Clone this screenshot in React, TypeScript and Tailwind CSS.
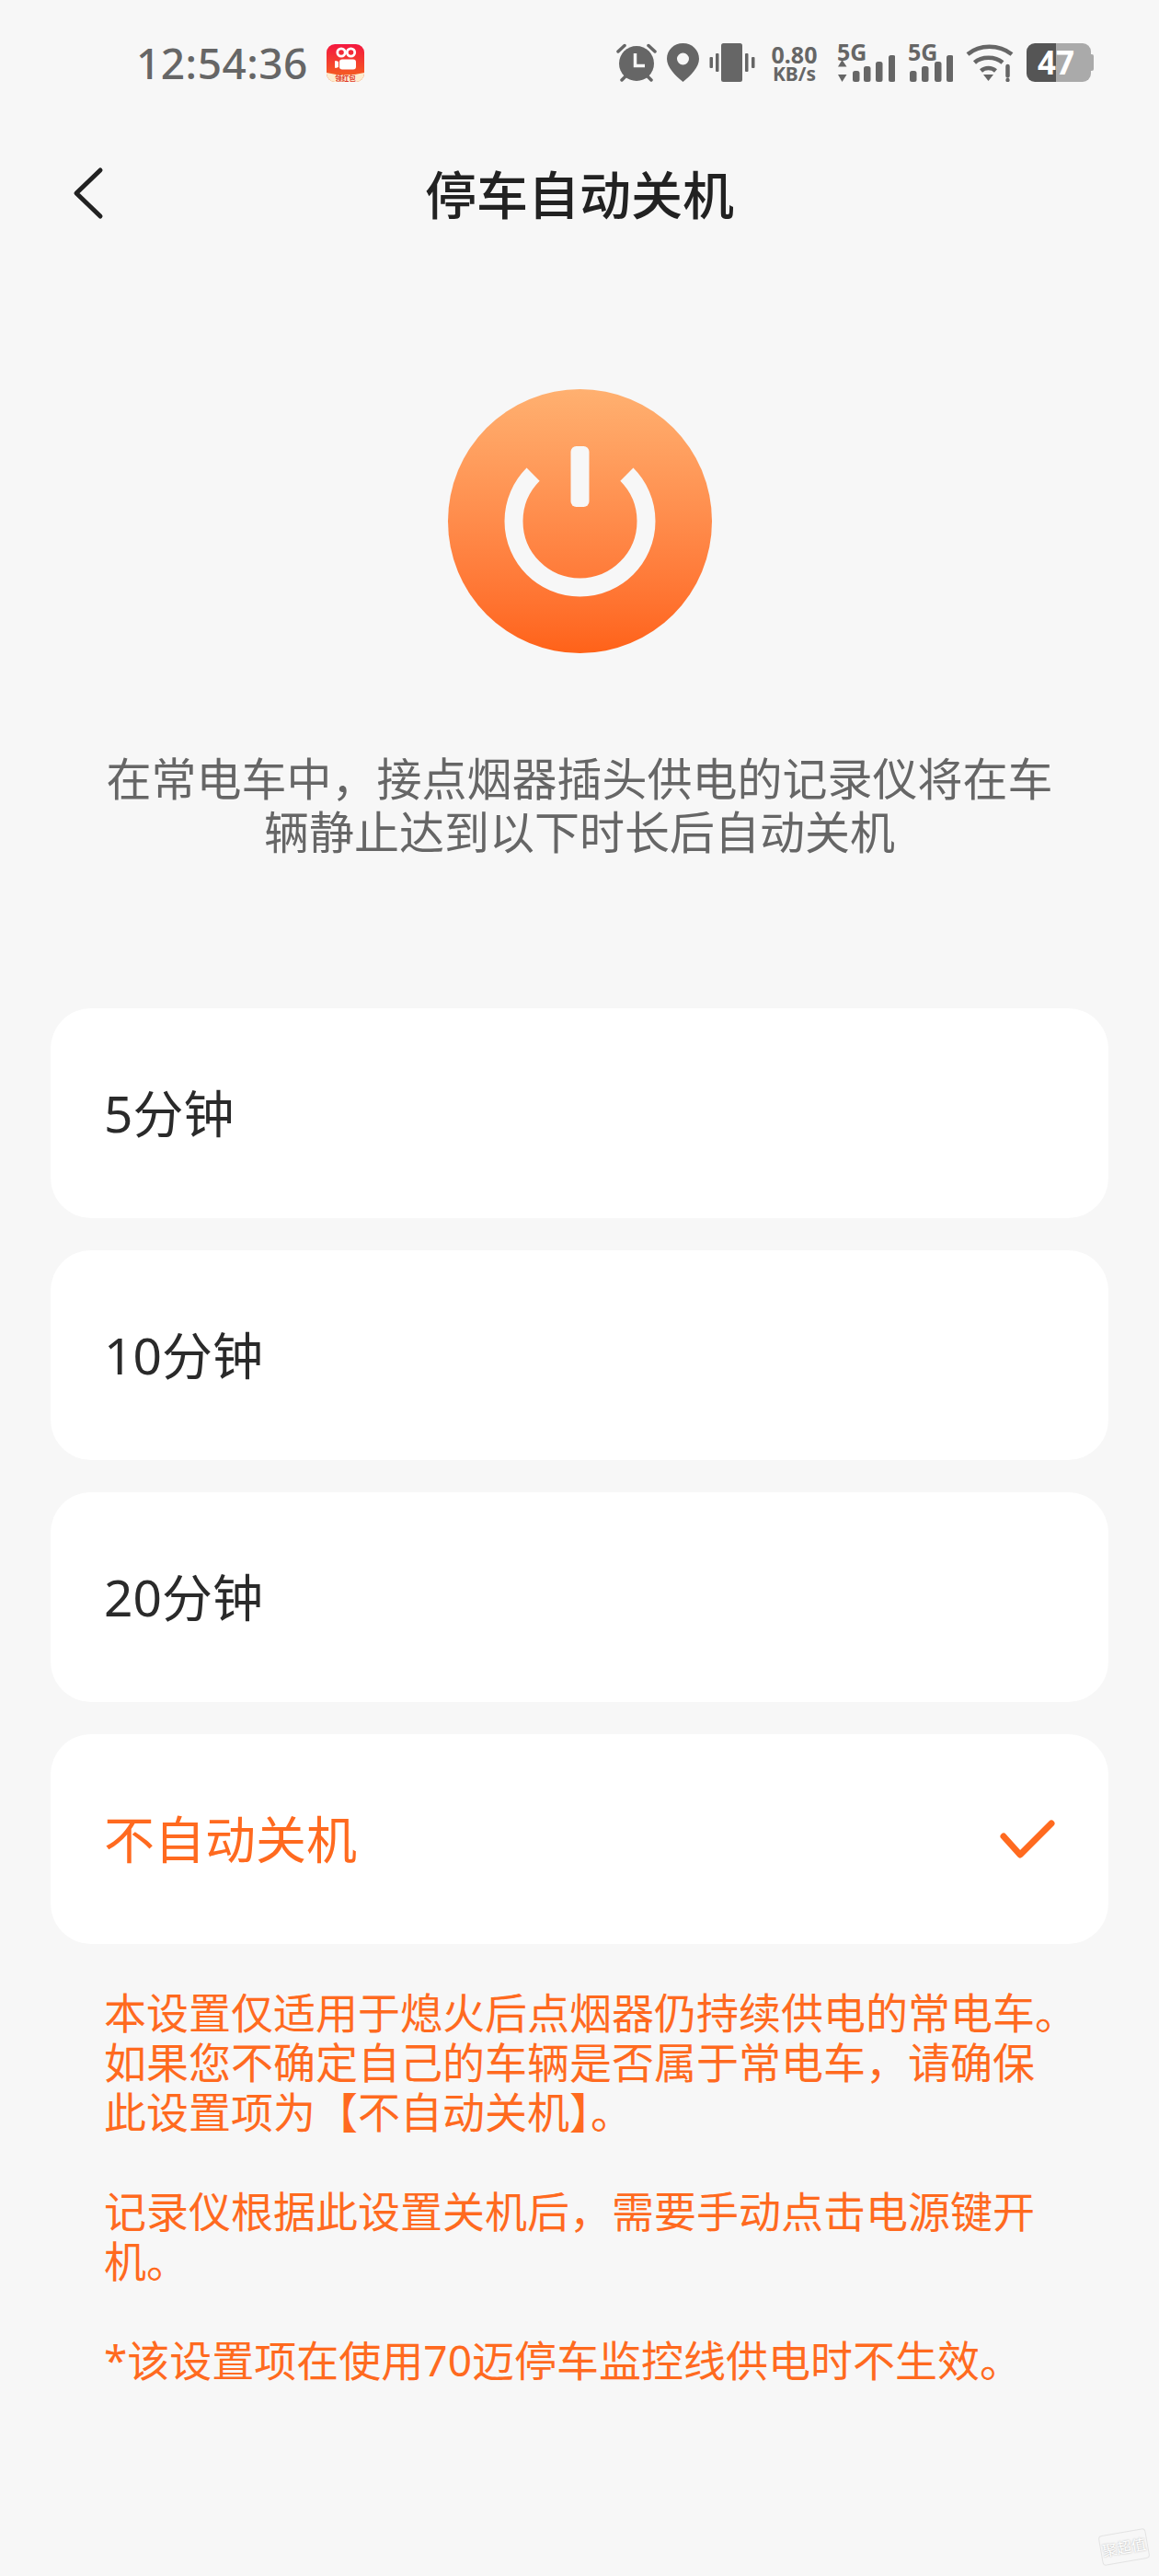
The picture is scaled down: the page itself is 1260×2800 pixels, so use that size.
import { useState } from "react";

const CJK = "font-['Noto_Sans','Noto_Sans_CJK_SC',sans-serif]";

function AlarmIcon() {
  return (
    <svg width="44" height="42" viewBox="0 0 44 42" fill="#666">
      <circle cx="22" cy="22" r="19" />
      <path d="M2 9 L9 2.5 M42 9 L35 2.5 M6 40 L10 36 M38 40 L34 36" stroke="#666" strokeWidth="3.5" strokeLinecap="round" />
      <path d="M20.5 11 V24.5 H31" fill="none" stroke="#f7f7f7" strokeWidth="3.5" />
    </svg>
  );
}

function PinIcon() {
  return (
    <svg width="35" height="42" viewBox="0 0 35 42" fill="#666">
      <path fillRule="evenodd" d="M17.5 0 C27.5 0 35 7.5 35 17 C35 26 26 35 17.5 42 C9 35 0 26 0 17 C0 7.5 7.5 0 17.5 0 Z M17.5 10.5 A6.5 6.5 0 1 0 17.5 23.5 A6.5 6.5 0 1 0 17.5 10.5 Z" />
    </svg>
  );
}

function VibrateIcon() {
  return (
    <svg width="50" height="42" viewBox="0 0 50 42" fill="#666">
      <rect x="13" y="0" width="23" height="42" rx="2.5" />
      <rect x="0.5" y="15" width="3.5" height="12" rx="1" />
      <rect x="7" y="11" width="3.5" height="20" rx="1" />
      <rect x="39" y="11" width="3.5" height="20" rx="1" />
      <rect x="46" y="15" width="3.5" height="12" rx="1" />
    </svg>
  );
}

function SignalBars({ arrows }: { arrows?: boolean }) {
  if (!arrows) {
    return (
      <svg width="49" height="29" viewBox="0 0 49 29" fill="#666">
        <rect x="2" y="17" width="7.5" height="12" rx="2.5" />
        <rect x="15" y="12" width="7.5" height="17" rx="2.5" />
        <rect x="29" y="7" width="7.5" height="22" rx="2.5" />
        <rect x="42" y="0" width="7.5" height="29" rx="2.5" />
      </svg>
    );
  }
  return (
    <svg width="63" height="29" viewBox="0 0 63 29" fill="#666">
      <path d="M1 12.5 L5.5 5 L10.5 12.5 Z M1 21 L10.5 21 L5.5 29 Z" />
      <rect x="17" y="17" width="7.5" height="12" rx="2.5" />
      <rect x="29" y="12" width="7.5" height="17" rx="2.5" />
      <rect x="42" y="7" width="7.5" height="22" rx="2.5" />
      <rect x="56" y="0" width="7.5" height="29" rx="2.5" />
    </svg>
  );
}

function WifiIcon() {
  return (
    <svg width="54" height="42" viewBox="0 0 54 42" fill="none" stroke="#666" strokeWidth="4.5">
      <path d="M2 12 C15 1 36 1 50 12" />
      <path d="M9.5 21 C17 14 32 14 40 21" />
      <path d="M16.5 30 C21 26 28 26 32.5 30" />
      <path d="M19 34 H30 L24.5 41 Z" fill="#666" stroke="none" />
      <path d="M45.5 25 V35.5" strokeWidth="4.5" strokeLinecap="round" />
      <circle cx="45.5" cy="40" r="2.2" fill="#666" stroke="none" />
    </svg>
  );
}

function KuaishouIcon() {
  return (
    <svg width="41" height="41" viewBox="0 0 41 41">
      <defs>
        <linearGradient id="ks" x1="0" y1="0" x2="0" y2="1">
          <stop offset="0" stopColor="#f4173f" />
          <stop offset="1" stopColor="#f56a1c" />
        </linearGradient>
      </defs>
      <rect width="41" height="41" rx="9" fill="url(#ks)" />
      <circle cx="16" cy="9" r="4.2" fill="none" stroke="#fff" strokeWidth="2.8" />
      <circle cx="26.5" cy="9" r="4.2" fill="none" stroke="#fff" strokeWidth="2.8" />
      <rect x="14" y="16.5" width="18" height="11" rx="3" fill="#fff" />
      <path d="M13 19 L10 18 Q9 18 9 19 V25 Q9 26 10 26 L13 25 Z" fill="#fff" />
      <path d="M0 31 Q20.5 36 41 31 V32 A9 9 0 0 1 32 41 H9 A9 9 0 0 1 0 32 Z" fill="#fdeccf" />
      <text x="20.5" y="39.5" textAnchor="middle" fontSize="7.5" fontWeight="700" fill="#e0382a" fontFamily="Noto Sans CJK SC, sans-serif">领红包</text>
    </svg>
  );
}

function StatusBar() {
  return (
    <div className={`flex items-center h-[136px] pl-[148px] text-[#666] ${CJK}`}>
      <span className="w-[185px] text-[46px] font-medium leading-none tracking-[0.5px] whitespace-nowrap">12:54:36</span>
      <div className="ml-[22px]">
        <KuaishouIcon />
      </div>

      <div className="ml-[274px]"><AlarmIcon /></div>
      <div className="ml-[11px]"><PinIcon /></div>
      <div className="ml-[11px]"><VibrateIcon /></div>

      <div className="ml-[16px] w-[53px] flex flex-col items-center font-bold">
        <span className="text-[25px] leading-[24px]">0.80</span>
        <span className="text-[21px] leading-[19px]">KB/s</span>
      </div>

      <div className="relative ml-[20px] w-[63px] h-[42px]">
        <span className="absolute left-0 top-[-4px] text-[25px] font-bold leading-[26px]">5G</span>
        <div className="absolute left-0 bottom-0"><SignalBars arrows /></div>
      </div>
      <div className="relative ml-[14px] w-[49px] h-[42px]">
        <span className="absolute left-0 top-[-4px] text-[25px] font-bold leading-[26px]">5G</span>
        <div className="absolute left-0 bottom-0"><SignalBars /></div>
      </div>

      <div className="ml-[14px]"><WifiIcon /></div>

      <div className="ml-[12px] relative flex w-[73px] h-[42px]">
        <div className="w-[32px] bg-[#555] rounded-l-[9px]" />
        <div className="w-[38px] bg-[#aaa] rounded-r-[9px]" />
        <div className="w-[3px] my-[12px] bg-[#aaa] rounded-r-[2px]" />
        <span className="absolute left-[12px] top-0 w-[40px] text-center text-white text-[35px] font-bold leading-[42px]">47</span>
      </div>
    </div>
  );
}

function PowerBadge() {
  return (
    <div className="mx-auto mt-[137px] w-[287px] h-[287px] rounded-full bg-linear-to-b from-[#ffb070] to-[#ff6218] flex items-center justify-center">
      <svg width="287" height="287" viewBox="0 0 287 287" fill="none">
        <path d="M92.6 92.6 A72 72 0 1 0 194.4 92.6" stroke="#f7f7f7" strokeWidth="20" />
        <rect x="133.5" y="62" width="20" height="66" rx="6" fill="#f7f7f7" />
      </svg>
    </div>
  );
}

export default function App() {
  const [selected, setSelected] = useState("不自动关机");
  const options = ["5分钟", "10分钟", "20分钟", "不自动关机"];

  return (
    <div className={`relative w-[1260px] h-[2800px] bg-[#f7f7f7] overflow-hidden ${CJK}`}>
      <StatusBar />

      {/* Title bar */}
      <div className="relative flex items-center justify-center h-[150px]">
        <button className="absolute left-[78px] top-[44px]">
          <svg width="36" height="60" viewBox="0 0 36 60" fill="none" stroke="#222" strokeWidth="5" strokeLinecap="round" strokeLinejoin="round">
            <path d="M31 5 L5 30 L31 55" />
          </svg>
        </button>
        <h1 className="text-[56px] font-medium text-[#222] leading-none">停车自动关机</h1>
      </div>

      <PowerBadge />

      <div className="mt-[107px] text-center text-[49px] leading-[58px] text-[#666]">
        <div>在常电车中，接点烟器插头供电的记录仪将在车</div>
        <div>辆静止达到以下时长后自动关机</div>
      </div>

      {/* Options */}
      <div className="mt-[163px] mx-[55px] flex flex-col gap-[35px]">
        {options.map((opt) => (
          <button
            key={opt}
            onClick={() => setSelected(opt)}
            className={`flex items-center justify-between h-[228px] pl-[58px] pr-[58px] bg-white rounded-[44px] text-[55px] ${
              opt === selected ? "text-[#ff6a1f]" : "text-[#2a2a2a]"
            }`}
          >
            <span>{opt}</span>
            {opt === selected && (
              <svg width="60" height="44" viewBox="0 0 60 44" fill="none" stroke="#ff6a1f" strokeWidth="7" strokeLinecap="round" strokeLinejoin="round">
                <path d="M4 19 L22 39 L56 5" />
              </svg>
            )}
          </button>
        ))}
      </div>

      {/* Notes */}
      <div className="mt-[47px] pl-[113px] text-[46px] leading-[54px] text-[#ff6a1f] whitespace-nowrap">
        <div>本设置仅适用于熄火后点烟器仍持续供电的常电车。</div>
        <div>如果您不确定自己的车辆是否属于常电车，请确保</div>
        <div>
          此设置项为【不自动关机<span className="[font-feature-settings:'halt']">】</span>。
        </div>
        <div className="mt-[54px]">记录仪根据此设置关机后，需要手动点击电源键开</div>
        <div>机。</div>
        <div className="mt-[54px]">*该设置项在使用70迈停车监控线供电时不生效。</div>
      </div>

      {/* Watermark */}
      <div className="absolute left-[1196px] top-[2752px] w-[52px] h-[33px] -rotate-[10deg] rounded-[4px] border border-[#e3e3e3] flex items-center justify-center text-[16px] leading-none text-white [text-shadow:0_0_2px_#aaa] whitespace-nowrap">
        聚超值
      </div>
    </div>
  );
}
